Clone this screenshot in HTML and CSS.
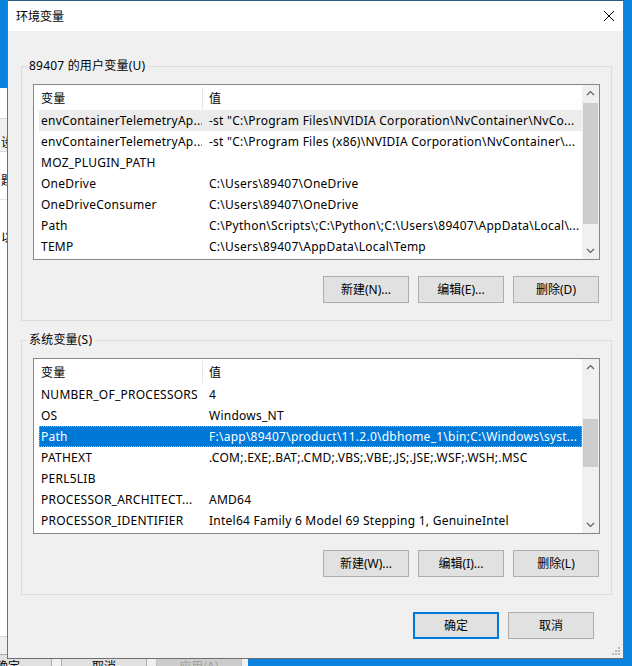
FILE: index.html
```html
<!DOCTYPE html>
<html lang="zh-CN">
<head>
<meta charset="utf-8">
<title>环境变量</title>
<link rel="stylesheet" href="styles.css">
</head>
<body>
<div class="backwin">
  <div class="bw-tabs"><span class="bw-glyph">设</span></div>
  <div class="bw-line1"><span class="bw-glyph">题</span></div>
  <div class="bw-line2"><span class="bw-glyph">以</span></div>
  <div class="bw-spacer"></div>
  <div class="bw-foot">
    <span class="bw-btn bw-ok">确定</span>
    <span class="bw-btn">取消</span>
    <span class="bw-btn bw-dis">应用(A)</span>
  </div>
</div>

<div class="dialog">
  <div class="titlebar">
    <span class="title">环境变量</span>
    <svg class="close" width="12" height="12" viewBox="0 0 12 12"><path d="M1 1 L11 11 M11 1 L1 11" stroke="#000" stroke-width="1" fill="none"/></svg>
  </div>
  <div class="dbody">
    <div class="group">
      <span class="legend">89407 的用户变量(U)</span>
      <div class="list">
        <div class="rows">
          <div class="hdr"><span class="c1">变量</span><span class="hsep"></span><span class="c2">值</span></div>
          <div class="row dim"><span class="c1">envContainerTelemetryAp...</span><span class="c2">-st "C:\Program Files\NVIDIA Corporation\NvContainer\NvCo...</span></div>
          <div class="row"><span class="c1">envContainerTelemetryAp...</span><span class="c2">-st "C:\Program Files (x86)\NVIDIA Corporation\NvContainer\...</span></div>
          <div class="row"><span class="c1">MOZ_PLUGIN_PATH</span><span class="c2"></span></div>
          <div class="row"><span class="c1">OneDrive</span><span class="c2">C:\Users\89407\OneDrive</span></div>
          <div class="row"><span class="c1">OneDriveConsumer</span><span class="c2">C:\Users\89407\OneDrive</span></div>
          <div class="row"><span class="c1">Path</span><span class="c2">C:\Python\Scripts\;C:\Python\;C:\Users\89407\AppData\Local\...</span></div>
          <div class="row"><span class="c1">TEMP</span><span class="c2">C:\Users\89407\AppData\Local\Temp</span></div>
        </div>
        <div class="vscroll">
          <svg class="arrow" width="17" height="17" viewBox="0 0 17 17"><path d="M5 10 L8.5 6.5 L12 10" stroke="#606060" stroke-width="1.2" fill="none"/></svg>
          <div class="track"><div class="thumb" style="margin-top:1px;height:121px"></div></div>
          <svg class="arrow" width="17" height="17" viewBox="0 0 17 17"><path d="M5 7 L8.5 10.5 L12 7" stroke="#606060" stroke-width="1.2" fill="none"/></svg>
        </div>
      </div>
      <div class="btns">
        <button class="btn">新建(N)...</button>
        <button class="btn">编辑(E)...</button>
        <button class="btn">删除(D)</button>
      </div>
    </div>

    <div class="group g2">
      <span class="legend">系统变量(S)</span>
      <div class="list">
        <div class="rows">
          <div class="hdr"><span class="c1">变量</span><span class="hsep"></span><span class="c2">值</span></div>
          <div class="row"><span class="c1">NUMBER_OF_PROCESSORS</span><span class="c2">4</span></div>
          <div class="row"><span class="c1">OS</span><span class="c2">Windows_NT</span></div>
          <div class="row sel"><span class="c1">Path</span><span class="c2">F:\app\89407\product\11.2.0\dbhome_1\bin;C:\Windows\syst...</span></div>
          <div class="row"><span class="c1">PATHEXT</span><span class="c2">.COM;.EXE;.BAT;.CMD;.VBS;.VBE;.JS;.JSE;.WSF;.WSH;.MSC</span></div>
          <div class="row"><span class="c1">PERL5LIB</span><span class="c2"></span></div>
          <div class="row"><span class="c1">PROCESSOR_ARCHITECT...</span><span class="c2">AMD64</span></div>
          <div class="row"><span class="c1">PROCESSOR_IDENTIFIER</span><span class="c2">Intel64 Family 6 Model 69 Stepping 1, GenuineIntel</span></div>
        </div>
        <div class="vscroll">
          <svg class="arrow" width="17" height="17" viewBox="0 0 17 17"><path d="M5 10 L8.5 6.5 L12 10" stroke="#606060" stroke-width="1.2" fill="none"/></svg>
          <div class="track"><div class="thumb" style="margin-top:43px;height:48px"></div></div>
          <svg class="arrow" width="17" height="17" viewBox="0 0 17 17"><path d="M5 7 L8.5 10.5 L12 7" stroke="#606060" stroke-width="1.2" fill="none"/></svg>
        </div>
      </div>
      <div class="btns">
        <button class="btn">新建(W)...</button>
        <button class="btn">编辑(I)...</button>
        <button class="btn">删除(L)</button>
      </div>
    </div>

    <div class="footer">
      <button class="btn default">确定</button>
      <button class="btn">取消</button>
    </div>
  </div>
  <svg class="grip" width="9" height="9" viewBox="0 0 9 9">
    <rect x="6" y="0" width="2" height="2" fill="#b8b8b8"/>
    <rect x="3" y="3" width="2" height="2" fill="#b8b8b8"/>
    <rect x="6" y="3" width="2" height="2" fill="#b8b8b8"/>
    <rect x="0" y="6" width="2" height="2" fill="#b8b8b8"/>
    <rect x="3" y="6" width="2" height="2" fill="#b8b8b8"/>
    <rect x="6" y="6" width="2" height="2" fill="#b8b8b8"/>
  </svg>
</div>
</body>
</html>
```

FILE: styles.css
```css
* { box-sizing: border-box; }
html, body { margin: 0; padding: 0; }
body {
  width: 632px;
  height: 666px;
  overflow: hidden;
  position: relative;
  background: #0a82de;
  font-family: "Noto Sans", "Noto Sans CJK SC", sans-serif;
  font-size: 12px;
  color: #000;
}

/* background window (System Properties) */
.backwin {
  position: absolute;
  left: 0;
  top: 88px;
  width: 248px;
  height: 590px;
  background: #fff;
  display: flex;
  flex-direction: column;
}
.bw-glyph {
  display: block;
  font-family: "Noto Sans CJK SC", sans-serif;
  font-size: 12px;
  line-height: 14px;
  padding-left: 1px;
}
.bw-tabs {
  margin-top: 30px;
  height: 34px;
  background: #f0f0f0;
  border-top: 1px solid #d9d9d9;
  border-bottom: 1px solid #d9d9d9;
  padding-top: 16px;
}
.bw-line1 {
  height: 48px;
  padding-top: 21px;
  border-bottom: 1px solid #e3e3e3;
}
.bw-line2 {
  padding-top: 30px;
}
.bw-spacer { flex: 1; }
.bw-foot {
  height: 42px;
  background: #f0f0f0;
  border-top: 1px solid #d6d6d6;
  display: flex;
  gap: 9px;
  padding: 17px 0 0 0;
}
.bw-btn {
  width: 86px;
  height: 23px;
  flex: none;
  background: #e1e1e1;
  border: 1px solid #adadad;
  font-family: "Noto Sans CJK SC", sans-serif;
  font-size: 12px;
  line-height: 21px;
  text-align: center;
  white-space: nowrap;
}
.bw-ok { width: 52px; border-left: none; text-align: left; text-indent: -4px; overflow: hidden; }
.bw-dis { background: #cccccc; border-color: #bfbfbf; color: #a0a0a0; }

/* dialog */
.dialog {
  position: absolute;
  left: 7px;
  top: 0;
  width: 617px;
  height: 659px;
  border: 1px solid #6f6f6f;
  border-top-color: #2b5a84;
  background: #f0f0f0;
  display: flex;
  flex-direction: column;
}
.titlebar {
  height: 30px;
  background: #fff;
  display: flex;
  align-items: center;
  justify-content: space-between;
  padding: 0 8px 0 8px;
}
.title {
  font-family: "Noto Sans CJK SC", sans-serif;
  font-size: 12px;
  line-height: 16px;
  margin-top: -1px;
}
.close { margin-top: -1px; }

.dbody {
  flex: 1;
  padding: 35px 11px 0 13px;
  display: flex;
  flex-direction: column;
}

.group {
  position: relative;
  width: 591px;
  border: 1px solid #dcdcdc;
  padding: 17px 11px 17px 11px;
}
.g2 { margin-top: 19px; }
.legend {
  position: absolute;
  top: -9px;
  left: 5px;
  padding: 0 3px 0 2px;
  background: #f0f0f0;
  line-height: 16px;
  font-size: 12px;
  letter-spacing: 0.2px;
}

.list {
  width: 567px;
  height: 176px;
  border: 1px solid #828790;
  background: #fff;
  display: flex;
}
.rows {
  flex: 1;
  display: flex;
  flex-direction: column;
  overflow: hidden;
  letter-spacing: 0.25px;
}
.hdr, .row {
  display: flex;
  align-items: center;
  margin-left: 5px;
  white-space: nowrap;
}
.hdr { height: 25px; }
.row { height: 21px; }
.c1 {
  width: 163px;
  padding-left: 2px;
  overflow: hidden;
  flex: none;
}
.c2 {
  flex: 1;
  padding-left: 7px;
  overflow: hidden;
}
.hdr .c2 { padding-left: 6px; }
.hsep {
  width: 1px;
  height: 22px;
  background: #e5e5e5;
  flex: none;
}
.row.dim { background: #ececec; }
.row.sel {
  background: #0078d7;
  color: #fff;
  outline: 1px dotted #f7a23a;
  outline-offset: -1px;
}

.vscroll {
  width: 17px;
  flex: none;
  background: #f0f0f0;
  display: flex;
  flex-direction: column;
}
.arrow { display: block; flex: none; }
.track { flex: 1; }
.thumb { background: #cdcdcd; margin-left: 1px; margin-right: 1px; }

.btns {
  display: flex;
  justify-content: flex-end;
  gap: 9px;
  margin-top: 16px;
  margin-right: 1px;
}
.btn {
  width: 86px;
  height: 27px;
  margin: 0;
  padding: 0;
  background: #e1e1e1;
  border: 1px solid #adadad;
  font-family: "Noto Sans", "Noto Sans CJK SC", sans-serif;
  font-size: 12px;
  color: #000;
  line-height: 23px;
  text-align: center;
}
.btn.default { border: 2px solid #0078d7; }

.footer {
  display: flex;
  justify-content: flex-end;
  gap: 9px;
  margin-top: 17px;
  margin-right: 18px;
}

.grip {
  position: absolute;
  right: 2px;
  bottom: 2px;
}
```
